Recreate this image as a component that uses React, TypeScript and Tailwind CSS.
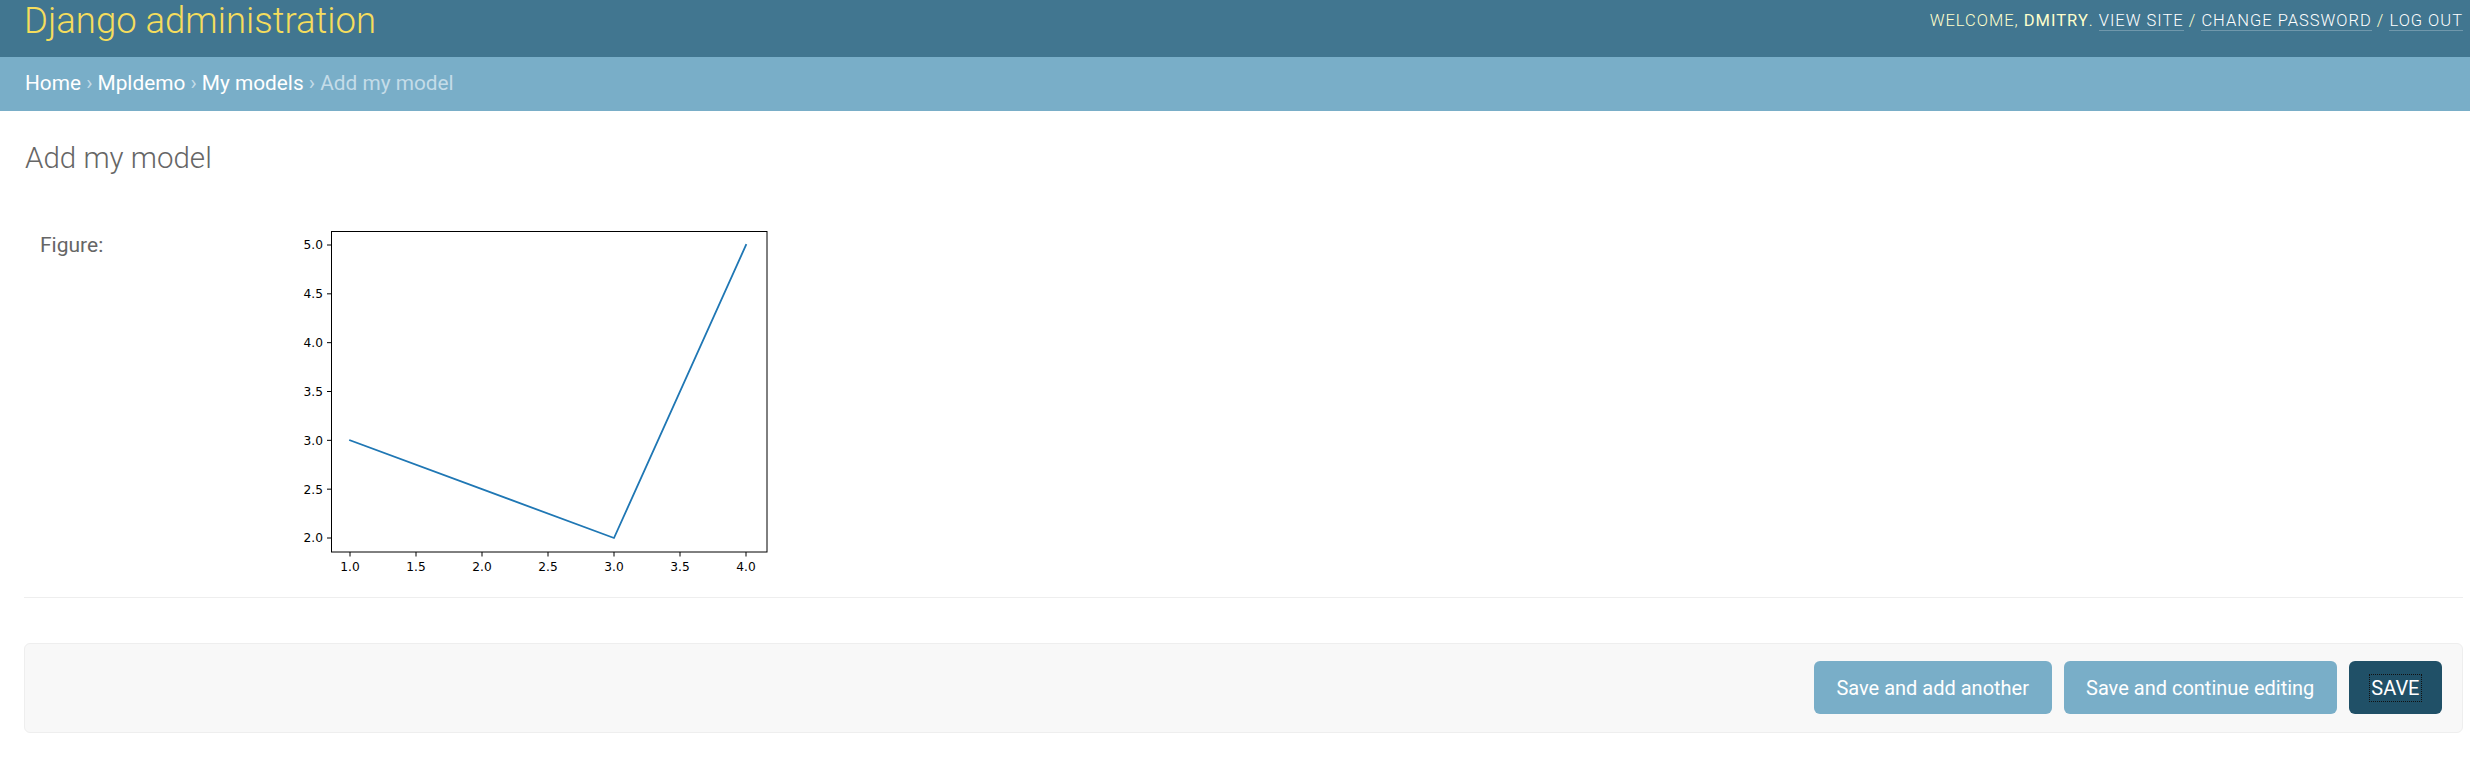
import React from "react";

const X = (v: number) => 56 + (v - 1) * 132;
const Y = (v: number) => 23 + (5 - v) * 97.667;

function Chart() {
  const xt = [1, 1.5, 2, 2.5, 3, 3.5, 4];
  const yt = [2, 2.5, 3, 3.5, 4, 4.5, 5];
  const pts = [
    [1, 3],
    [2, 2.5],
    [3, 2],
    [4, 5],
  ]
    .map(([a, b]) => `${X(a)},${Y(b)}`)
    .join(" ");
  return (
    <svg width={482} height={360} viewBox="0 0 482 360" className="block shrink-0">
      <rect x={0} y={0} width={482} height={360} fill="#ffffff" />
      <polyline points={pts} fill="none" stroke="#1f77b4" strokeWidth={1.8} strokeLinejoin="round" strokeLinecap="square" />
      <rect x={37.5} y={9.5} width={435.5} height={320.5} fill="none" stroke="#000" strokeWidth={1} />
      {yt.map((v) => (
        <g key={"y" + v}>
          <line x1={33} x2={37.5} y1={Y(v)} y2={Y(v)} stroke="#000" strokeWidth={1} />
          <text
            x={29}
            y={Y(v) + 4.4}
            textAnchor="end"
            fontSize={12.2}
            fontFamily="'DejaVu Sans', sans-serif"
            fill="#000"
          >
            {v.toFixed(1)}
          </text>
        </g>
      ))}
      {xt.map((v) => (
        <g key={"x" + v}>
          <line x1={X(v)} x2={X(v)} y1={330} y2={334.5} stroke="#000" strokeWidth={1} />
          <text
            x={X(v)}
            y={349}
            textAnchor="middle"
            fontSize={12.2}
            fontFamily="'DejaVu Sans', sans-serif"
            fill="#000"
          >
            {v.toFixed(1)}
          </text>
        </g>
      ))}
    </svg>
  );
}

export default function App() {
  return (
    <div className="min-h-[783px] bg-white font-['Roboto',sans-serif]">
      {/* Header */}
      <div className="h-[57px] bg-[#417690] flex justify-between items-start pl-[24px] pr-[7px]">
        <div className="pt-[3px] leading-none text-[36.5px] font-light text-[#f5dd5d] whitespace-nowrap">
          Django administration
        </div>
        <div className="pt-[13px] leading-none text-[16.5px] font-light tracking-[1px] uppercase text-[#ffffcc] whitespace-nowrap">
          WELCOME, <strong className="font-normal">DMITRY</strong>.{" "}
          <a className="text-white border-b border-[rgba(255,255,255,0.25)]">VIEW SITE</a> /{" "}
          <a className="text-white border-b border-[rgba(255,255,255,0.25)]">CHANGE PASSWORD</a> /{" "}
          <a className="text-white border-b border-[rgba(255,255,255,0.25)]">LOG OUT</a>
        </div>
      </div>

      {/* Breadcrumbs */}
      <div className="h-[54px] bg-[#79aec8] pl-[25px] pt-[16px] leading-none text-[20.8px] text-[#c4dce8] whitespace-nowrap">
        <a className="text-white">Home</a> › <a className="text-white">Mpldemo</a> ›{" "}
        <a className="text-white">My models</a> › Add my model
      </div>

      {/* Content */}
      <div className="pl-[24px] pr-[7px] pt-[33px]">
        <h1 className="pl-[1px] text-[29.5px] leading-none font-light text-[#666666]">Add my model</h1>

        <div className="mt-[33px] pt-[15px] pb-[15px] border-b border-[#eeeeee] flex">
          <div className="w-[270px] pl-[16px] pt-[13px] text-[21px] leading-none text-[#666666]">Figure:</div>
          <Chart />
        </div>

        <div className="mt-[45px] h-[90px] bg-[#f8f8f8] border border-[#eeeeee] rounded-[6px] flex justify-end items-center pr-[20px] gap-[12px]">
          <button className="h-[53px] px-[22.5px] rounded-[6px] bg-[#79aec8] text-white text-[20px] leading-normal">
            Save and add another
          </button>
          <button className="h-[53px] px-[22.5px] rounded-[6px] bg-[#79aec8] text-white text-[20px] leading-normal">
            Save and continue editing
          </button>
          <button className="h-[53px] px-[22.5px] rounded-[6px] bg-[#205067] text-white text-[20px] leading-normal">
            <span className="outline-1 outline-dotted outline-[#111] outline-offset-[1px]">SAVE</span>
          </button>
        </div>
      </div>
    </div>
  );
}
